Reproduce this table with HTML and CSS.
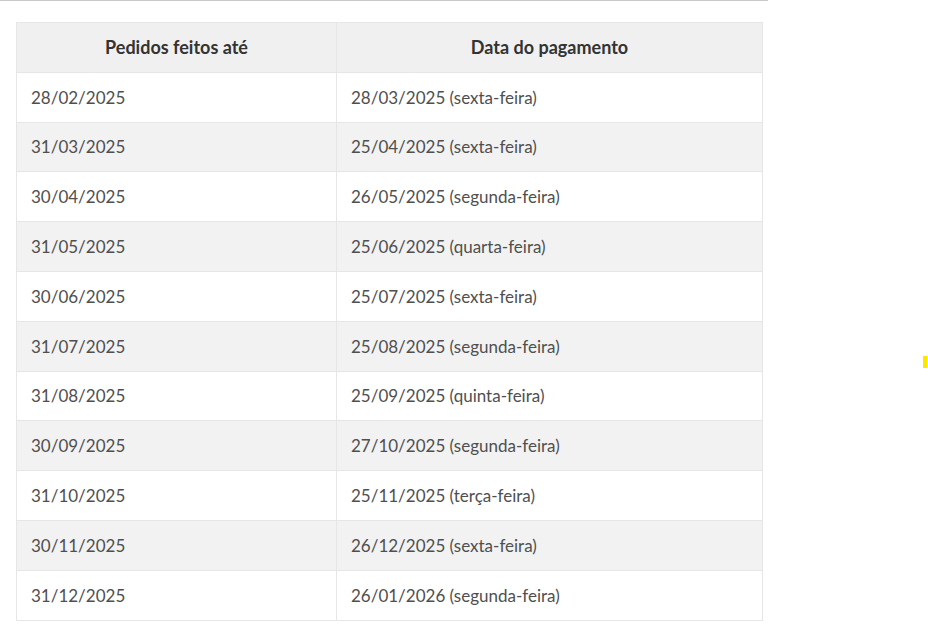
FILE: index.html
```html
<!DOCTYPE html>
<html lang="pt-BR">
<head>
<meta charset="utf-8">
<title>Datas de pagamento</title>
<link rel="stylesheet" href="styles.css">
</head>
<body>
<div class="page">
  <div class="topline"></div>
  <table class="schedule">
    <thead>
      <tr><th class="c1">Pedidos feitos até</th><th class="c2">Data do pagamento</th></tr>
    </thead>
    <tbody>
      <tr><td>28/02/2025</td><td>28/03/2025 (sexta-feira)</td></tr>
      <tr><td>31/03/2025</td><td>25/04/2025 (sexta-feira)</td></tr>
      <tr><td>30/04/2025</td><td>26/05/2025 (segunda-feira)</td></tr>
      <tr><td>31/05/2025</td><td>25/06/2025 (quarta-feira)</td></tr>
      <tr><td>30/06/2025</td><td>25/07/2025 (sexta-feira)</td></tr>
      <tr><td>31/07/2025</td><td>25/08/2025 (segunda-feira)</td></tr>
      <tr><td>31/08/2025</td><td>25/09/2025 (quinta-feira)</td></tr>
      <tr><td>30/09/2025</td><td>27/10/2025 (segunda-feira)</td></tr>
      <tr><td>31/10/2025</td><td>25/11/2025 (terça-feira)</td></tr>
      <tr><td>30/11/2025</td><td>26/12/2025 (sexta-feira)</td></tr>
      <tr><td>31/12/2025</td><td>26/01/2026 (segunda-feira)</td></tr>
    </tbody>
  </table>
  <div class="marker"></div>
</div>
</body>
</html>
```
FILE: styles.css
```css
html, body {
  margin: 0;
  padding: 0;
  background: #ffffff;
}
.page {
  position: relative;
  width: 928px;
  height: 630px;
  overflow: hidden;
  font-family: Lato, "Open Sans", "Liberation Sans", sans-serif;
}
.topline {
  width: 768px;
  height: 1px;
  background: #c9c9c9;
}
.schedule {
  margin: 21px 0 0 16px;
  width: 747px;
  border-collapse: collapse;
  table-layout: fixed;
  font-size: 17px;
  color: #4f4f4f;
}
.schedule th,
.schedule td {
  border: 1px solid #e6e6e6;
  height: 49.8px;
  padding: 0 14px;
  box-sizing: border-box;
  vertical-align: middle;
}
.schedule th {
  background: #f0f0f0;
  font-size: 18px;
  font-weight: 700;
  color: #333333;
  text-align: center;
}
.schedule .c1 { width: 320px; }
.schedule td {
  text-align: left;
}
.schedule tbody tr:nth-child(even) td {
  background: #f2f2f2;
}
.marker {
  position: absolute;
  left: 923px;
  top: 356px;
  width: 4px;
  height: 12px;
  background: #ffe600;
}
```
